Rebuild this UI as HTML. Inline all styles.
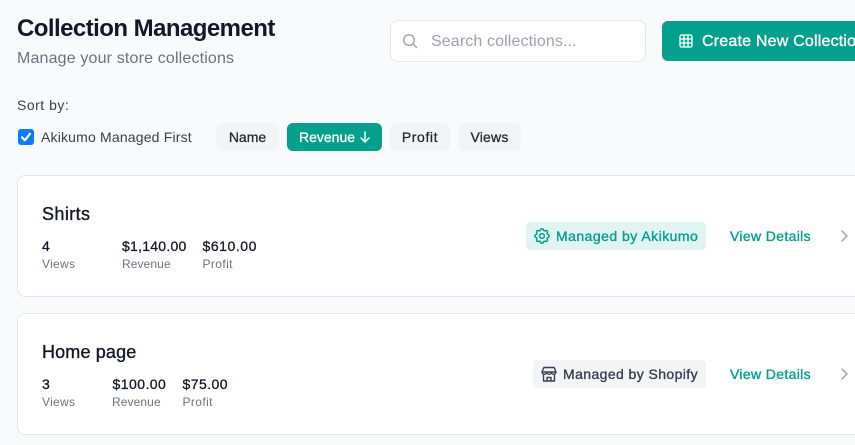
<!DOCTYPE html>
<html><head><meta charset="utf-8"><style>
html,body{margin:0;padding:0}
body{width:855px;height:445px;overflow:hidden;position:relative;background:#f9fafb;font-family:"Liberation Sans",sans-serif;color:#111827}
.a{position:absolute;white-space:nowrap}
.box{position:absolute;box-sizing:border-box}
.pill{position:absolute;top:123px;height:28px;line-height:28px;border-radius:6px;background:#f3f4f6;color:#1f2937;font-size:14px;text-align:center;-webkit-text-stroke:.3px currentColor}
.card{position:absolute;left:17px;width:900px;height:122px;background:#fff;border:1px solid #e5e7eb;border-radius:8px;box-sizing:border-box}
.v{font-size:14px;line-height:18px;letter-spacing:.25px;color:#111827;-webkit-text-stroke:.3px currentColor}
.l{font-size:12px;line-height:16px;letter-spacing:.1px;color:#6b7280}
.t{font-size:18px;line-height:24px;letter-spacing:.15px;color:#111827;-webkit-text-stroke:.35px currentColor}
.vd{font-size:14px;line-height:20px;letter-spacing:.35px;color:#059f8e;-webkit-text-stroke:.35px currentColor}
svg{position:absolute;fill:none;stroke-linecap:round;stroke-linejoin:round}
</style></head><body>
<div class="a" style="left:17px;top:13px;font-size:24px;line-height:32px;font-weight:700;letter-spacing:-.55px;color:#111827">Collection Management</div>
<div class="a" style="left:17px;top:49px;font-size:16px;line-height:20px;letter-spacing:.16px;color:#6b7280">Manage your store collections</div>

<div class="box" style="left:390px;top:20px;width:256px;height:42px;background:#fff;border:1px solid #e5e7eb;border-radius:8px"></div>
<svg style="left:402px;top:33px" width="16" height="16" viewBox="0 0 16 16" stroke="#9ca3af" stroke-width="1.4"><circle cx="7" cy="7" r="5.300"/><path d="M11 11l3.600 3.600"/></svg>
<div class="a" style="left:431px;top:32px;font-size:16px;line-height:20px;letter-spacing:.12px;color:#9ca3af">Search collections...</div>

<div class="box" style="left:662px;top:21px;width:260px;height:40px;background:#059f8e;border-radius:6px"></div>
<svg style="left:679px;top:34px" width="14" height="14" viewBox="0 0 14 14" stroke="#fff" stroke-width="1.300"><rect x="1" y="1" width="12" height="12" rx="1.500"/><path d="M1 5h12M1 9h12M5 1v12M9 1v12"/></svg>
<div class="a" style="left:702px;top:32px;font-size:16px;line-height:20px;letter-spacing:.2px;color:#fff;-webkit-text-stroke:.35px #fff">Create New Collection</div>

<div class="a" style="left:17px;top:96px;font-size:14px;line-height:18px;letter-spacing:.5px;color:#374151">Sort by:</div>
<div class="box" style="left:18px;top:129px;width:16px;height:16px;border-radius:3px;background:#0a7cff"></div>
<svg style="left:18px;top:129px" width="16" height="16" viewBox="0 0 16 16" stroke="#fff" stroke-width="2.200"><path d="M4 8.300l2.800 3L12 4.800"/></svg>
<div class="a" style="left:41px;top:128px;font-size:14px;line-height:18px;letter-spacing:.18px;color:#374151">Akikumo Managed First</div>

<div class="pill" style="left:216px;width:63px">Name</div>
<div class="box" style="left:287px;top:123px;width:95px;height:28px;background:#059f8e;border-radius:6px"></div>
<div class="a" style="left:299px;top:123px;line-height:28px;font-size:14px;letter-spacing:0;color:#fff;-webkit-text-stroke:.3px #fff">Revenue</div>
<svg style="left:359px;top:130px" width="12" height="14" viewBox="0 0 12 14" stroke="#fff" stroke-width="1.500"><path d="M6 2v10M2 8l4 4 4-4"/></svg>
<div class="pill" style="left:390px;width:60px;letter-spacing:.6px">Profit</div>
<div class="pill" style="left:458px;width:63px;letter-spacing:.2px">Views</div>

<div class="card" style="top:175px"></div>
<div class="a t" style="left:42px;top:202px;letter-spacing:.4px">Shirts</div>
<div class="a v" style="left:42px;top:237px">4</div><div class="a l" style="left:42px;top:256px;letter-spacing:.3px">Views</div>
<div class="a v" style="left:122px;top:237px">$1,140.00</div><div class="a l" style="left:122px;top:256px">Revenue</div>
<div class="a v" style="left:202.500px;top:237px;letter-spacing:.55px">$610.00</div><div class="a l" style="left:202.500px;top:256px;letter-spacing:.4px">Profit</div>
<div class="box" style="left:526px;top:222px;width:180px;height:28px;background:#e0f4f1;border-radius:4px"></div>
<svg style="left:534px;top:228px" width="16" height="16" viewBox="2 2 20 20" stroke="#059f8e" stroke-width="1.900"><path d="M10.325 4.317c.426-1.756 2.924-1.756 3.350 0a1.724 1.724 0 002.573 1.066c1.543-.94 3.310.826 2.370 2.370a1.724 1.724 0 001.065 2.572c1.756.426 1.756 2.924 0 3.350a1.724 1.724 0 00-1.066 2.573c.94 1.543-.826 3.310-2.370 2.370a1.724 1.724 0 00-2.572 1.065c-.426 1.756-2.924 1.756-3.350 0a1.724 1.724 0 00-2.573-1.066c-1.543.94-3.310-.826-2.370-2.370a1.724 1.724 0 00-1.065-2.572c-1.756-.426-1.756-2.924 0-3.350a1.724 1.724 0 001.066-2.573c-.94-1.543.826-3.310 2.370-2.370.996.608 2.296.07 2.572-1.065z"/><circle cx="12" cy="12" r="3"/></svg>
<div class="a vd" style="left:556px;top:226px;letter-spacing:.47px">Managed by Akikumo</div>
<div class="a vd" style="left:730px;top:226px">View Details</div>
<svg style="left:837px;top:228px" width="16" height="16" viewBox="0 0 16 16" stroke="#9ca3af" stroke-width="1.500"><path d="M5 3l5 5-5 5"/></svg>

<div class="card" style="top:313px"></div>
<div class="a t" style="left:42px;top:340px">Home page</div>
<div class="a v" style="left:42px;top:375px">3</div><div class="a l" style="left:42px;top:394px;letter-spacing:.3px">Views</div>
<div class="a v" style="left:112.500px;top:375px;letter-spacing:.45px">$100.00</div><div class="a l" style="left:112px;top:394px">Revenue</div>
<div class="a v" style="left:182.500px;top:375px;letter-spacing:.45px">$75.00</div><div class="a l" style="left:182.500px;top:394px;letter-spacing:.4px">Profit</div>
<div class="box" style="left:533px;top:360px;width:173px;height:28px;background:#f3f4f6;border-radius:4px"></div>
<svg style="left:541px;top:366px" width="16" height="16" viewBox="0 0 16 16" stroke="#374151" stroke-width="1.400"><path d="M1 6L2.800 1.500h10.400L15 6M1 6h14M1 6a2.300 2.300 0 0 0 4.700 0 2.300 2.300 0 0 0 4.600 0A2.300 2.300 0 0 0 15 6M2.500 9v6h11V9M6 15v-3.500h4V15"/></svg>
<div class="a vd" style="left:563px;top:364px;color:#374151;letter-spacing:.41px">Managed by Shopify</div>
<div class="a vd" style="left:730px;top:364px">View Details</div>
<svg style="left:837px;top:366px" width="16" height="16" viewBox="0 0 16 16" stroke="#9ca3af" stroke-width="1.500"><path d="M5 3l5 5-5 5"/></svg>
</body></html>
